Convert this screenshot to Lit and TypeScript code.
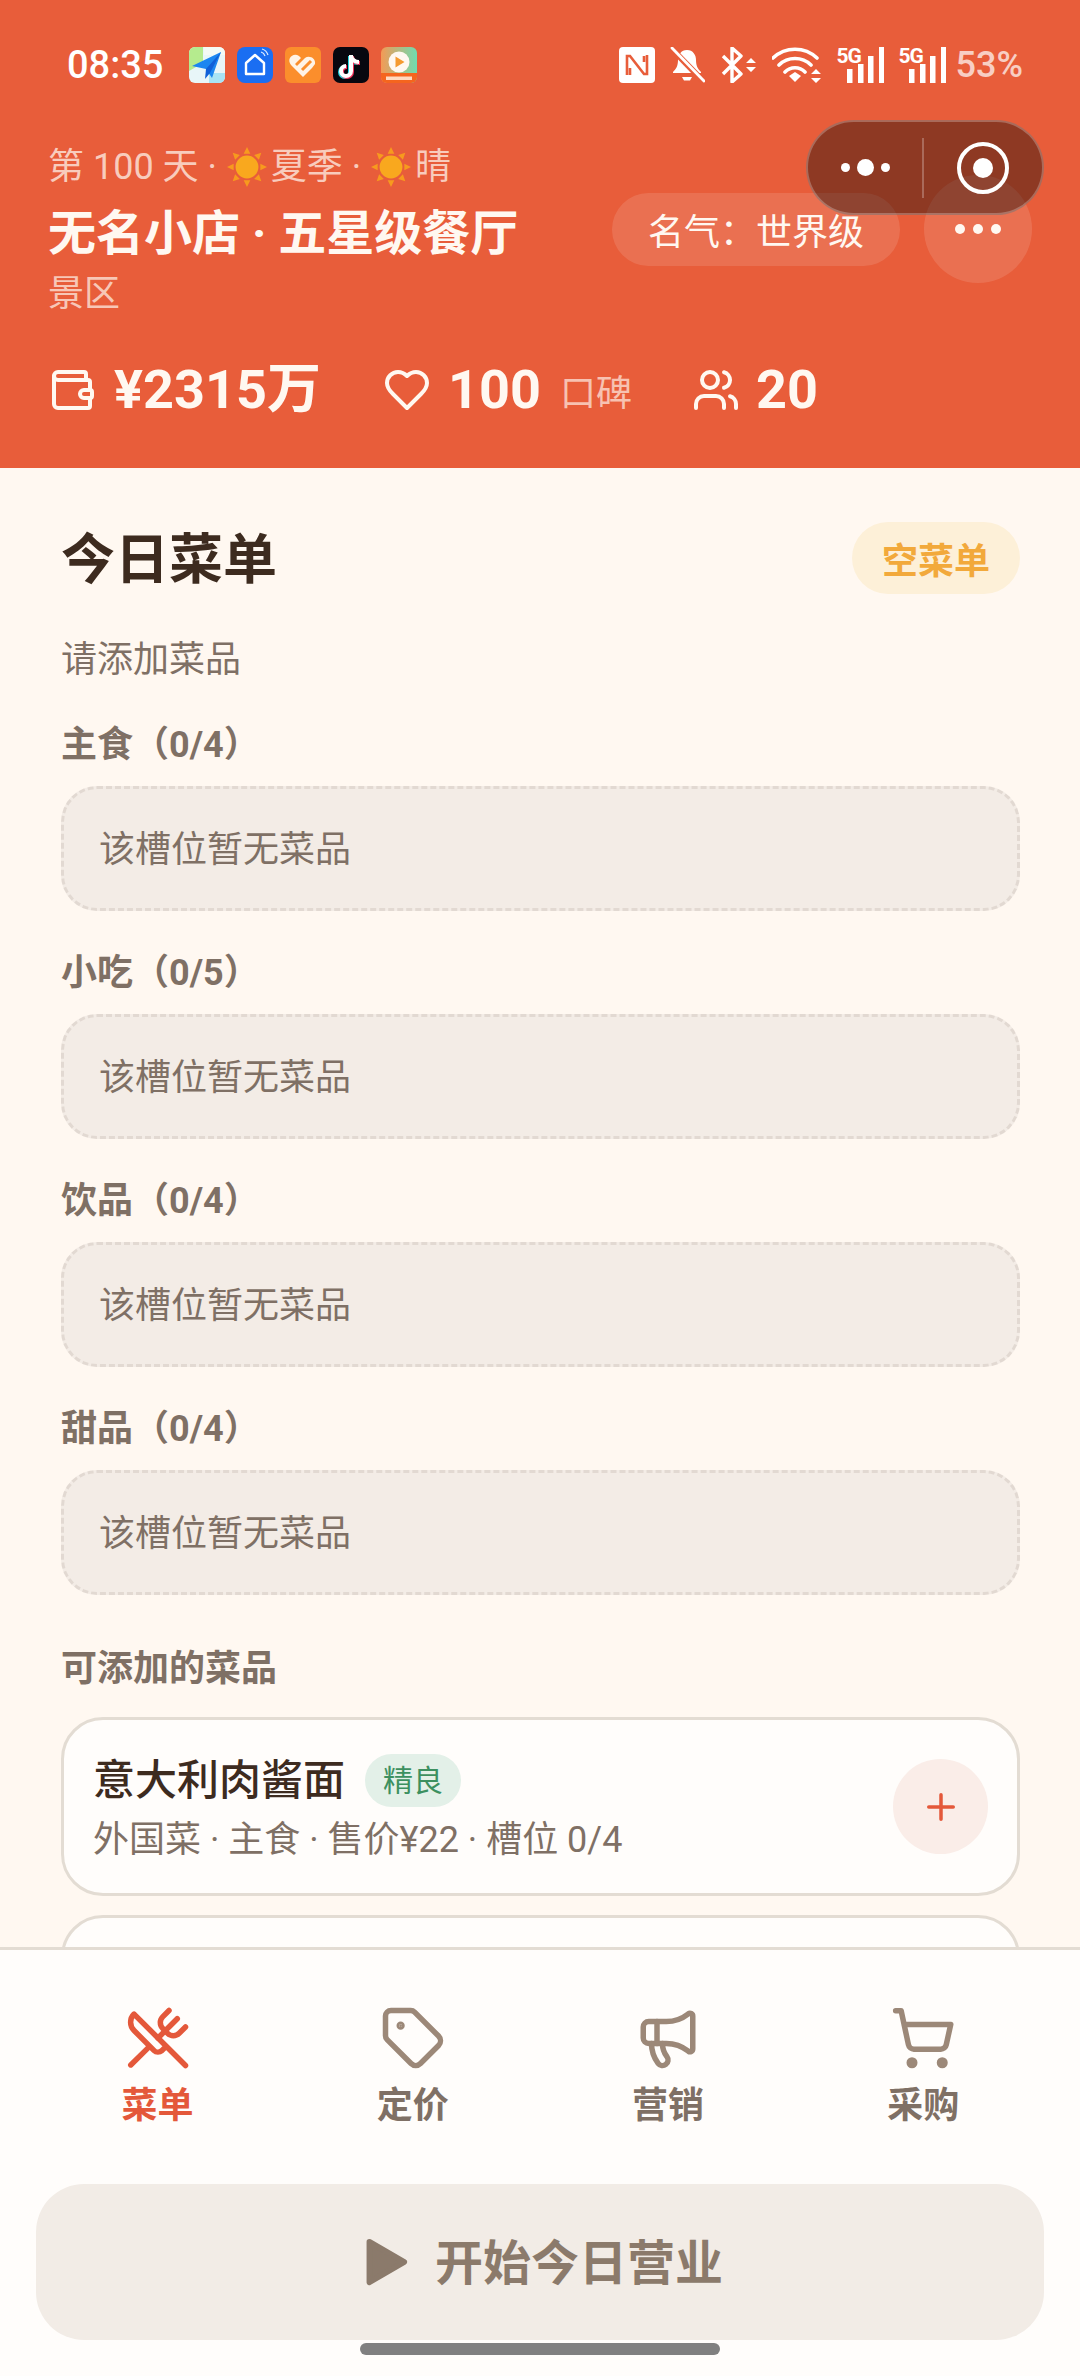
import { LitElement, html, css, svg } from "lit";
import { customElement } from "lit/decorators.js";

const icon = (size: number, body: unknown, sw = 2) => html`<svg class="ic" width=${size} height=${size} viewBox="0 0 24 24" fill="none" stroke="currentColor" stroke-width=${sw} stroke-linecap="round" stroke-linejoin="round">${body}</svg>`;

const sun = html`<svg class="sun" width="40" height="40" viewBox="0 0 42 42"><g fill="#F79A1E"><path d="M21 0l3.500 7h-7zM21 42l-3.500-7h7zM0 21l7-3.500v7zM42 21l-7 3.500v-7zM6 6l7.500 2.500-5 5zM36 36l-7.500-2.500 5-5zM36 6l-2.500 7.500-5-5zM6 36l2.500-7.500 5 5z"/></g><circle cx="21" cy="21" r="12" fill="#F9A81E"/></svg>`;

const wallet = svg`<path d="M19 7V4a1 1 0 0 0-1-1H5a2 2 0 0 0 0 4h15a1 1 0 0 1 1 1v4h-3a2 2 0 0 0 0 4h3a1 1 0 0 0 1-1v-2a1 1 0 0 0-1-1"/><path d="M3 5v14a2 2 0 0 0 2 2h15a1 1 0 0 0 1-1v-4"/>`;
const heart = svg`<path d="M19 14c1.490-1.460 3-3.210 3-5.500A5.500 5.500 0 0 0 16.500 3c-1.760 0-3 .5-4.500 2-1.500-1.500-2.740-2-4.500-2A5.500 5.500 0 0 0 2 8.500c0 2.300 1.500 4.050 3 5.500l7 7Z"/>`;
const users = svg`<path d="M16 21v-2a4 4 0 0 0-4-4H6a4 4 0 0 0-4 4v2"/><circle cx="9" cy="7" r="4"/><path d="M22 21v-2a4 4 0 0 0-3-3.870"/><path d="M16 3.130a4 4 0 0 1 0 7.750"/>`;
const utensils = svg`<path d="m16 2-2.300 2.300a3 3 0 0 0 0 4.200l1.800 1.800a3 3 0 0 0 4.200 0L22 8"/><path d="M15 15 3.300 3.300a4.200 4.200 0 0 0 0 6l7.300 7.300c.7.7 2 .7 2.800 0L15 15Zm0 0 7 7"/><path d="m2.100 21.800 6.400-6.300"/><path d="m19 5-7 7"/>`;
const tag = svg`<path d="M12.586 2.586A2 2 0 0 0 11.172 2H4a2 2 0 0 0-2 2v7.172a2 2 0 0 0 .586 1.414l8.704 8.704a2.426 2.426 0 0 0 3.420 0l6.580-6.580a2.426 2.426 0 0 0 0-3.420z"/><circle cx="7.500" cy="7.500" r=".5" fill="currentColor"/>`;
const megaphone = svg`<path d="M11 6a13 13 0 0 0 8.400-2.800A1 1 0 0 1 21 4v12a1 1 0 0 1-1.600.8A13 13 0 0 0 11 14H5a2 2 0 0 1-2-2V8a2 2 0 0 1 2-2z"/><path d="M6 14a12 12 0 0 0 2.400 7.200 2 2 0 0 0 3.200-2.400A8 8 0 0 1 10 14"/><path d="M8 6v8"/>`;
const cart = svg`<circle cx="8" cy="21" r="1"/><circle cx="19" cy="21" r="1"/><path d="M2.050 2.050h2l2.660 12.420a2 2 0 0 0 2 1.580h9.780a2 2 0 0 0 1.950-1.570l1.650-7.430H5.120"/>`;

const appIcons = html`
  <svg class="app" width="36" height="36" viewBox="0 0 36 36"><defs><clipPath id="a1"><rect width="36" height="36" rx="6"/></clipPath></defs><g clip-path="url(#a1)"><rect width="36" height="36" fill="#E8F6F8"/><path d="M0 0h14v16L0 24z" fill="#B5EB8E"/><path d="M15 0h21v8H15z" fill="#F4FAF4"/><path d="M20 26h16v10H20z" fill="#A8E4F4"/><path d="M3 19 32 5l-9 26-6-9z" fill="#1B86F0"/><path d="M32 5 17 22l-1 10 5-6z" fill="#0F60D8"/></g></svg>
  <svg class="app" width="36" height="36" viewBox="0 0 36 36"><rect width="36" height="36" rx="8" fill="#1A6EF2"/><path d="M9 16l9-8 9 8v11H9z" fill="none" stroke="#fff" stroke-width="2.400" stroke-linejoin="round"/><path d="M24 5a6 6 0 0 1 4 4M25 2a9 9 0 0 1 6 6" fill="none" stroke="#DCEAFF" stroke-width="1.200"/></svg>
  <svg class="app" width="36" height="36" viewBox="0 0 36 36"><rect width="36" height="36" rx="6" fill="#FB8E2C"/><path d="M18 30 6 18c-5-6 2-13 8-9l2 2-6 6 2 2 8-8c4-3 11 0 10 6l-3 4-8 8z" fill="#FFF3E6"/><path d="M17 23l9-9" stroke="#FB8E2C" stroke-width="3"/></svg>
  <svg class="app" width="36" height="36" viewBox="0 0 36 36"><rect width="36" height="36" rx="7" fill="#07070F"/><g fill="none" stroke-width="4"><path d="M18 8v16a5 5 0 1 1-5-5M18 9c1 4 4 6 8 6" stroke="#27D5DE" transform="translate(-1 1)"/><path d="M18 8v16a5 5 0 1 1-5-5M18 9c1 4 4 6 8 6" stroke="#F0305A" transform="translate(1 1)"/><path d="M18 8v16a5 5 0 1 1-5-5M18 9c1 4 4 6 8 6" stroke="#fff"/></g></svg>
  <svg class="app" width="36" height="36" viewBox="0 0 36 36"><defs><clipPath id="a5"><rect width="36" height="36" rx="6"/></clipPath><linearGradient id="g5" x1="0" x2="1"><stop offset="0" stop-color="#F49A55"/><stop offset="1" stop-color="#6FDCB0"/></linearGradient></defs><g clip-path="url(#a5)"><rect width="36" height="36" fill="url(#g5)"/><rect y="26" width="36" height="10" fill="#F5651E"/><circle cx="18" cy="15" r="10.500" fill="#FFF8F0"/><path d="M14.500 9.500l9 5.500-9 5.500z" fill="#F59A30"/><rect x="5" y="29.500" width="26" height="3.500" fill="#FFD9C0"/></g></svg>`;

const sys = (w: number, body: unknown) => html`<svg class="sys" width=${w} height="36" viewBox="0 0 ${w} 36">${body}</svg>`;
const bars = svg`<g fill="#fff"><rect x="10" y="22" width="5.500" height="14"/><rect x="21" y="17" width="5.500" height="19"/><rect x="31" y="9" width="5.500" height="27"/><rect x="42" y="0" width="5" height="36"/></g>`;
const arrows = (x: number, y: number) => svg`<path d="M${x} ${y - 2}l5-5 5 5zM${x} ${y + 2}l5 5 5-5z" fill="#fff"/>`;

const net = () => html`<span class="net">${sys(47, bars)}<span class="g">5G</span></span>`;
const status = html`
  ${sys(36, svg`<rect width="36" height="36" rx="4" fill="#fff"/><path d="M8 28V9h3l14 18h3V8M25 9v6M11 21v7" fill="none" stroke="#E85D3A" stroke-width="2.600"/>`)}
  ${sys(35, svg`<path d="M17 3c-6 0-9 5-9 10 0 6-2 9-5 12v1h28v-1c-3-3-5-6-5-12 0-5-3-10-9-10z" fill="#fff"/><path d="M12 30h10l-2 3.500h-6z" fill="#fff"/><path d="M1 1 34 35" stroke="#E85D3A" stroke-width="6"/><path d="M2 1 34 34" stroke="#fff" stroke-width="2.800" stroke-linecap="round"/>`)}
  ${sys(37, svg`<path d="M3 9l18 18-9 8V1l9 8L3 27" fill="none" stroke="#fff" stroke-width="3.400" stroke-linejoin="round"/>${arrows(26, 18)}`)}
  ${sys(50, svg`<path d="M1 11a32 32 0 0 1 44 0M7 18a23 23 0 0 1 32 0M13 25a14 14 0 0 1 20 0" fill="none" stroke="#fff" stroke-width="3.600" stroke-linecap="round"/><path d="M17 29l6-4 6 4-6 6z" fill="#fff"/>${arrows(39, 29)}`)}
  ${net()}${net()}`;

const SLOTS = ["主食\uFF080/4\uFF09", "小吃\uFF080/5\uFF09", "饮品\uFF080/4\uFF09", "甜品\uFF080/4\uFF09"];
const NAV: [string, unknown, boolean][] = [
  ["菜单", utensils, true],
  ["定价", tag, false],
  ["营销", megaphone, false],
  ["采购", cart, false],
];

@customElement("app-root")
export class AppRoot extends LitElement {
  static styles = css`
    :host {
      display: block;
      width: 1080px;
      height: 2376px;
      font-family: Roboto, "Noto Sans CJK SC", sans-serif;
      overflow: hidden;
    }
    * { box-sizing: border-box; }
    svg { display: block; flex: none; }
    .page { position: relative; height: 100%; display: flex; flex-direction: column; background: #fff8f1; }

    .header { background: #e85d3a; color: #fff8f1; height: 468px; flex: none; padding: 0 48px; display: flex; flex-direction: column; }
    .status { height: 126px; padding: 47px 9px 0 19px; display: flex; align-items: flex-start; }
    .time { font-size: 38px; line-height: 36px; font-weight: 500; color: #fff; width: 122px; }
    .apps { display: flex; gap: 12px; }
    .sysrow { margin-left: auto; display: flex; gap: 15px; align-items: center; height: 36px; }
    .net { position: relative; display: block; width: 47px; height: 36px; }
    .g { position: absolute; left: 0; top: -2px; font-size: 21px; line-height: 22px; font-weight: 700; letter-spacing: -1px; color: #fff; }
    .pct { font-size: 36px; line-height: 36px; font-weight: 500; opacity: .7; color: #fff; margin-left: -5px; }

    .info { display: flex; justify-content: space-between; align-items: center; }
    .left { padding-top: 19px; }
    .day { font-size: 36px; line-height: 44px; color: #fff8f1b8; display: flex; align-items: center; white-space: pre; }
    .sun { margin: 0 4px 0 1px; }
    .title { font-size: 48px; line-height: 66px; font-weight: 700; margin-top: 12px; color: #fff8f1; }
    .area { font-size: 36px; line-height: 44px; margin-top: 5px; color: #fff8f1b3; }
    .right { display: flex; align-items: center; gap: 24px; padding-top: 16px; }
    .pill { height: 73px; width: 288px; border-radius: 37px; background: #ffffff1f; font-size: 36px; display: flex; align-items: center; justify-content: center; color: #fff8f1; }
    .more { width: 108px; height: 108px; border-radius: 50%; background: #ffffff1f; display: flex; align-items: center; justify-content: center; gap: 8px; }
    .more i { width: 10px; height: 10px; border-radius: 50%; background: #fff8f1; }

    .stats { display: flex; align-items: center; height: 66px; margin-top: 41px; }
    .stat { display: flex; align-items: center; }
    .stat b { font-size: 54px; line-height: 66px; font-weight: 700; }
    .stat .ic { color: #fff8f1; }
    .s1 { width: 335px; gap: 18px; }
    .s2 { width: 309px; gap: 17px; }
    .s3 { gap: 16px; }
    .s2 small { font-size: 36px; color: #fff8f1a8; margin-left: 2px; }

    .capsule { position: absolute; left: 806px; top: 120px; width: 238px; height: 95px; border-radius: 48px; background: #00000063; border: 2px solid #ffffff40; display: flex; align-items: center; }
    .cdots { width: 114px; display: flex; align-items: center; justify-content: center; gap: 7px; }
    .cdots i { display: block; width: 9px; height: 9px; border-radius: 50%; background: #fff; }
    .cdots i.big { width: 17px; height: 17px; }
    .cdiv { width: 2px; height: 60px; background: #ffffff40; }
    .ctarget { flex: 1; display: flex; align-items: center; justify-content: center; }
    .ring { width: 52px; height: 52px; border-radius: 50%; border: 4.500px solid #fff; display: flex; align-items: center; justify-content: center; }
    .ring i { display: block; width: 20px; height: 20px; border-radius: 50%; background: #fff; }

    .content { flex: 1; min-height: 0; overflow: hidden; padding: 54px 60px 0 61px; }
    .head { display: flex; justify-content: space-between; align-items: center; height: 72px; }
    .head h1 { margin: 0; padding-top: 6px; font-size: 54px; line-height: 72px; font-weight: 700; color: #3d2b1f; }
    .badge { width: 168px; height: 72px; border-radius: 36px; background: #fdf0d8; color: #f2a93b; font-size: 36px; font-weight: 700; display: flex; align-items: center; justify-content: center; }
    .hint { font-size: 36px; line-height: 48px; color: #7f7065; margin-top: 42px; margin-bottom: 35px; }
    .label { font-size: 36px; line-height: 48px; padding-top: 2px; font-weight: 700; color: #7f7065; }
    .slot { height: 125px; margin: 17px 0 36px; border-radius: 36px; background: #f3ece6; border: 3px dashed #e2d9d2; padding: 0 0 6px 35px; display: flex; align-items: center; font-size: 36px; color: #7f7065; }
    .label.avail { margin-top: 48px; margin-bottom: 24px; }
    .slot:last-of-type { margin-bottom: 0; }
    .card { height: 179px; border-radius: 42px; background: #fffdfb; border: 3px solid #e3dcd3; padding: 0 29px; display: flex; align-items: center; justify-content: space-between; margin-bottom: 19px; }
    .text { padding-top: 3px; }
    .name { display: flex; align-items: center; gap: 20px; font-size: 42px; line-height: 56px; font-weight: 500; color: #3d2b1f; }
    .tag { width: 96px; height: 53px; border-radius: 27px; background: #e3f0e8; color: #3d9060; font-size: 30px; font-weight: 400; display: flex; align-items: center; justify-content: center; }
    .meta { font-size: 36px; line-height: 48px; color: #7f7065; margin-top: 7px; }
    .add { width: 95px; height: 95px; border-radius: 50%; background: #faede8; color: #e4583a; display: flex; align-items: center; justify-content: center; }

    .footer { flex: none; background: #fffdfb; border-top: 3px solid #e3dcd3; padding: 55px 36px 36px; }
    .nav { display: grid; grid-template-columns: repeat(4, 1fr); margin: 0 -7px 0 -8px; height: 179px; padding-left: 2px; }
    .item { display: flex; flex-direction: column; align-items: center; font-size: 36px; line-height: 48px; font-weight: 700; color: #7f7065; }
    .item .ic { color: #9c8878; margin-bottom: 11px; }
    .item.on { color: #e4583a; }
    .item.on .ic { color: #e4583a; }
    .start { height: 156px; border-radius: 48px; background: #f2ece6; display: flex; align-items: center; justify-content: center; gap: 24px; font-size: 48px; font-weight: 700; color: #8b7a6b; }
    .start span { padding-bottom: 6px; }
    .start .ic { fill: #8b7a6b; color: #8b7a6b; }
    .home { position: absolute; left: 360px; top: 2343px; width: 360px; height: 12px; border-radius: 6px; background: #808080; }
  `;

  render() {
    return html`<div class="page">
      <div class="header">
        <div class="status">
          <span class="time">08:35</span>
          <div class="apps">${appIcons}</div>
          <div class="sysrow">${status}<span class="pct">53%</span></div>
        </div>
        <div class="info">
          <div class="left">
            <div class="day">第 100 天 · ${sun}夏季 · ${sun}晴</div>
            <div class="title">无名小店 · 五星级餐厅</div>
            <div class="area">景区</div>
          </div>
          <div class="right">
            <div class="pill">名气\uFF1A世界级</div>
            <div class="more"><i></i><i></i><i></i></div>
          </div>
        </div>
        <div class="stats">
          <div class="stat s1">${icon(48, wallet)}<b>¥2315万</b></div>
          <div class="stat s2">${icon(48, heart)}<b>100</b><small>口碑</small></div>
          <div class="stat s3">${icon(48, users)}<b>20</b></div>
        </div>
      </div>

      <div class="content">
        <div class="head"><h1>今日菜单</h1><span class="badge">空菜单</span></div>
        <div class="hint">请添加菜品</div>
        ${SLOTS.map((s) => html`<div class="label">${s}</div><div class="slot">该槽位暂无菜品</div>`)}
        <div class="label avail">可添加的菜品</div>
        <div class="card">
          <div class="text">
            <div class="name">意大利肉酱面<span class="tag">精良</span></div>
            <div class="meta">外国菜 · 主食 · 售价¥22 · 槽位 0/4</div>
          </div>
          <div class="add">${icon(42, svg`<path d="M5 12h14M12 5v14"/>`, 2)}</div>
        </div>
        <div class="card"></div>
      </div>

      <div class="footer">
        <div class="nav">
          ${NAV.map(([t, ic, on]) => html`<div class="item ${on ? "on" : ""}">${icon(66, ic)}${t}</div>`)}
        </div>
        <div class="start">${icon(54, svg`<polygon points="5.500 3 21 12 5.500 21 5.500 3"/>`, 2.5)}<span>开始今日营业</span></div>
      </div>

      <div class="capsule">
        <div class="cdots"><i></i><i class="big"></i><i></i></div>
        <div class="cdiv"></div>
        <div class="ctarget"><div class="ring"><i></i></div></div>
      </div>
      <div class="home"></div>
    </div>`;
  }
}
